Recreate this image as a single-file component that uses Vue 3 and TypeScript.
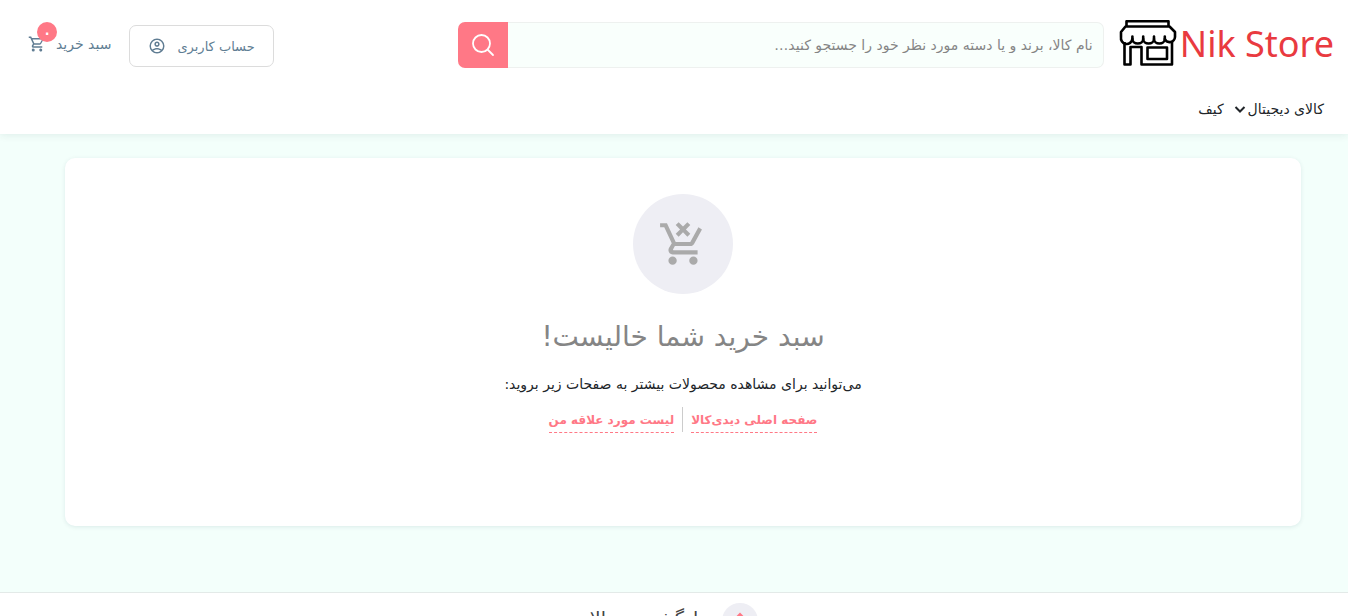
<script setup lang="ts">
import { ref } from 'vue'

interface Category {
  title: string
  expandable: boolean
}

const query = ref('')
const cartCount = '۰'
const categories: Category[] = [
  { title: 'کالای دیجیتال', expandable: true },
  { title: 'کیف', expandable: false },
]
</script>

<template>
  <div class="page" dir="rtl" lang="fa">
    <header class="header">
      <div class="top">
        <a class="logo" href="#" dir="ltr" aria-label="Nik Store">
          <svg class="shop" viewBox="0 0 58 48" aria-hidden="true">
            <g fill="none" stroke="#000" stroke-width="2.6" stroke-linejoin="round">
              <path d="M7.5 7.500V2.300H49.500V7.500" />
              <path d="M6.500 7.500H50.500L56 13V18A5.400 5.600 0 0 1 45.800 20A5.400 4.500 0 0 1 35 20A5.400 4.500 0 0 1 24.200 20A5.400 4.500 0 0 1 13.400 20A5.400 5.600 0 0 1 2 18V13Z" />
              <path d="M13.400 20V17.500M24.200 20V17.500M35 20V17.500M45.800 20V17.500" stroke-linecap="round" />
              <path d="M5.500 23V45.500H11.500V28H22.500V45.500H53V23" />
              <path d="M28.500 28.500H48V40H28.500Z" />
            </g>
          </svg>
          <span class="brand">Nik Store</span>
        </a>
        <form class="search" role="search" @submit.prevent>
          <input v-model="query" type="text" aria-label="جستجو" placeholder="نام کالا، برند و یا دسته مورد نظر خود را جستجو کنید…" />
          <button type="submit" aria-label="جستجو">
            <svg viewBox="0 0 24 24" fill="none" stroke="#fff" stroke-width="1.8" stroke-linecap="round">
              <circle cx="10.500" cy="10.500" r="8.500" />
              <path d="M17 17L22 22" />
            </svg>
          </button>
        </form>
        <div class="actions">
          <button class="account" type="button">
            <span>حساب کاربری</span>
            <svg class="icon" viewBox="0 0 24 24" aria-hidden="true">
              <path d="M12,2A10,10 0 0,0 2,12A10,10 0 0,0 12,22A10,10 0 0,0 22,12A10,10 0 0,0 12,2M7.07,18.28C7.5,17.38 10.12,16.5 12,16.5C13.88,16.5 16.5,17.38 16.93,18.28C15.57,19.36 13.86,20 12,20C10.14,20 8.43,19.36 7.07,18.28M18.36,16.83C16.93,15.09 13.46,14.5 12,14.5C10.54,14.5 7.07,15.09 5.64,16.83C4.62,15.5 4,13.82 4,12C4,7.59 7.59,4 12,4C16.41,4 20,7.59 20,12C20,13.82 19.38,15.5 18.36,16.83M12,6C10.06,6 8.5,7.56 8.5,9.5C8.5,11.44 10.06,13 12,13C13.94,13 15.5,11.44 15.5,9.5C15.5,7.56 13.94,6 12,6M12,11A1.5,1.5 0 0,1 10.5,9.5A1.5,1.5 0 0,1 12,8A1.5,1.5 0 0,1 13.5,9.5A1.5,1.5 0 0,1 12,11Z" />
            </svg>
          </button>
          <a class="cart" href="#">
            <span>سبد خرید</span>
            <span class="cart-icon">
              <svg class="icon" viewBox="0 0 24 24" aria-hidden="true">
                <path d="M17,18A2,2 0 0,1 19,20A2,2 0 0,1 17,22C15.89,22 15,21.1 15,20C15,18.89 15.89,18 17,18M1,2H4.27L5.21,4H20A1,1 0 0,1 21,5C21,5.17 20.95,5.34 20.88,5.5L17.3,11.97C16.96,12.58 16.3,13 15.55,13H8.1L7.2,14.63L7.17,14.75A0.25,0.25 0 0,0 7.42,15H19V17H7C5.89,17 5,16.1 5,15C5,14.65 5.09,14.32 5.24,14.04L6.6,11.59L3,4H1V2M7,18A2,2 0 0,1 9,20A2,2 0 0,1 7,22C5.89,22 5,21.1 5,20C5,18.89 5.89,18 7,18M16,11L18.78,6H6.14L8.5,11H16Z" />
              </svg>
              <span class="badge">{{ cartCount }}</span>
            </span>
          </a>
        </div>
      </div>
      <nav class="nav">
        <a v-for="item in categories" :key="item.title" href="#">
          <span>{{ item.title }}</span>
          <svg v-if="item.expandable" class="chevron" viewBox="0 0 12 12" aria-hidden="true">
            <path d="M1.500 4L6 8.500L10.500 4" fill="none" stroke="#212529" stroke-width="2" />
          </svg>
        </a>
      </nav>
    </header>

    <main class="main">
      <section class="card">
        <div class="empty-icon">
          <svg viewBox="0 0 24 24" aria-hidden="true">
            <path d="M14.1 8.5L12 6.4L9.9 8.5L8.5 7.1L10.6 5L8.5 2.9L9.9 1.5L12 3.6L14.1 1.5L15.5 2.9L13.4 5L15.5 7.1L14.1 8.5M7 18A2 2 0 0 1 7 22A2 2 0 0 1 7 18M17 18A2 2 0 0 1 17 22A2 2 0 0 1 17 18M7.2 14.8C7.2 14.9 7.3 15 7.4 15H19V17H7C5.9 17 5 16.1 5 15C5 14.6 5.1 14.3 5.2 14L6.6 11.600L3 4H1V2H4.3L8.500 11H15.500L19.400 4L21.100 5L17.300 12C17 12.600 16.300 13 15.600 13H8.100L7.200 14.600V14.800Z" />
          </svg>
        </div>
        <h1>سبد خرید شما خالیست!</h1>
        <p>می‌توانید برای مشاهده محصولات بیشتر به صفحات زیر بروید:</p>
        <div class="links">
          <a href="#">صفحه اصلی دیدی‌کالا</a>
          <span class="divider"></span>
          <a href="#">لیست مورد علاقه من</a>
        </div>
      </section>
    </main>

    <footer class="footer">
      <button class="to-top" type="button">
        <span class="circle">
          <svg viewBox="0 0 24 24" aria-hidden="true">
            <path d="M5 12L12 5L19 12" fill="none" stroke="#ff7886" stroke-width="2" />
          </svg>
        </span>
        <span class="to-top-label">بازگشت به بالا</span>
      </button>
    </footer>
  </div>
</template>

<style>
body {
  margin: 0;
}
</style>

<style scoped>
.page {
  display: flex;
  flex-direction: column;
  height: 100vh;
  overflow: hidden;
  background: #f3fffb;
  color: #212529;
  font-family: "DejaVu Sans", sans-serif;
  font-size: 14px;
}
.page * {
  box-sizing: border-box;
}
a {
  color: inherit;
  text-decoration: none;
}
button,
input {
  font-family: inherit;
}
button {
  cursor: pointer;
}
.header {
  flex: none;
  background: #fff;
  box-shadow: 0 1px 8px rgba(0, 60, 60, 0.09);
}
.top {
  display: flex;
  align-items: center;
  height: 90px;
  padding: 0 14px 0 28px;
}
.logo {
  display: flex;
  align-items: flex-start;
  gap: 3px;
  margin-left: 15px;
  padding-bottom: 2px;
}
.shop {
  width: 58px;
  height: 48px;
}
.brand {
  color: #e93a40;
  font-family: "Noto Sans", sans-serif;
  font-size: 36px;
  line-height: 50px;
  white-space: nowrap;
}
.search {
  display: flex;
  flex: 1;
  height: 46px;
}
.search input {
  flex: 1;
  min-width: 0;
  padding: 0 10px;
  border: 1px solid #eef1ef;
  border-left: 0;
  border-radius: 0 7px 7px 0;
  background: #f9fffc;
  font-size: 14px;
}
.search input::placeholder {
  color: #858585;
  opacity: 1;
}
.search button {
  display: flex;
  align-items: center;
  justify-content: center;
  width: 50px;
  padding: 0;
  border: 0;
  border-radius: 7px 0 0 7px;
  background: #ff7886;
}
.search svg {
  width: 24px;
  height: 24px;
}
.actions {
  display: flex;
  align-items: center;
  gap: 18px;
  margin-right: 184px;
  color: #607d93;
  white-space: nowrap;
}
.account {
  display: flex;
  align-items: center;
  gap: 11px;
  height: 42px;
  margin-top: 2px;
  padding: 0 18px;
  border: 1px solid #dcdcdc;
  border-radius: 7px;
  background: #fff;
  color: inherit;
  font-size: 13px;
}
.icon {
  display: block;
  width: 18px;
  height: 18px;
  fill: currentColor;
}
.cart {
  display: flex;
  align-items: center;
  gap: 10px;
  padding-bottom: 2px;
}
.cart-icon {
  position: relative;
}
.badge {
  position: absolute;
  top: -13px;
  left: 9px;
  width: 20px;
  height: 20px;
  border-radius: 50%;
  background: #ff7886;
  color: #fff;
  font-size: 20px;
  line-height: 20px;
  text-align: center;
}
.nav {
  display: flex;
  gap: 10px;
  height: 44px;
  padding: 8px 24px 0;
  line-height: 22px;
}
.nav a {
  display: flex;
  align-items: center;
  gap: 2px;
  height: 22px;
}
.chevron {
  width: 12px;
  height: 12px;
}
.main {
  flex: none;
  padding: 24px 47px 66px 65px;
}
.card {
  display: flex;
  flex-direction: column;
  align-items: center;
  padding: 36px 20px 93px;
  border-radius: 10px;
  background: #fff;
  box-shadow: 0 1px 4px rgba(0, 60, 80, 0.1);
}
.empty-icon {
  display: flex;
  align-items: center;
  justify-content: center;
  width: 100px;
  height: 100px;
  border-radius: 50%;
  background: #eeeef4;
}
.empty-icon svg {
  width: 50px;
  height: 50px;
  fill: #aaa;
}
h1 {
  margin: 22px 0 14px;
  color: #858585;
  font-size: 28px;
  font-weight: 400;
  line-height: 42px;
}
p {
  margin: 0 0 11px;
  line-height: 24px;
}
.links {
  display: flex;
  gap: 8px;
  height: 26px;
  color: #ff7886;
  font-size: 12px;
  font-weight: 700;
  line-height: 26px;
}
.links a {
  border-bottom: 1px dashed #ff7886;
}
.divider {
  width: 1px;
  height: 25px;
  background: #ccc;
}
.footer {
  flex: none;
  display: flex;
  justify-content: center;
  height: 60px;
  padding-top: 10px;
  border-top: 1px solid #e3eae8;
  background: #fff;
}
.to-top {
  display: flex;
  align-items: center;
  gap: 18px;
  height: 36px;
  padding: 0;
  border: 0;
  background: none;
  color: #444;
  font-size: 19px;
}
.to-top-label {
  padding-bottom: 6px;
}
.circle {
  display: flex;
  justify-content: center;
  align-items: center;
  width: 36px;
  height: 36px;
  border-radius: 50%;
  background: #eeeef4;
}
.circle svg {
  width: 24px;
  height: 24px;
}
</style>
